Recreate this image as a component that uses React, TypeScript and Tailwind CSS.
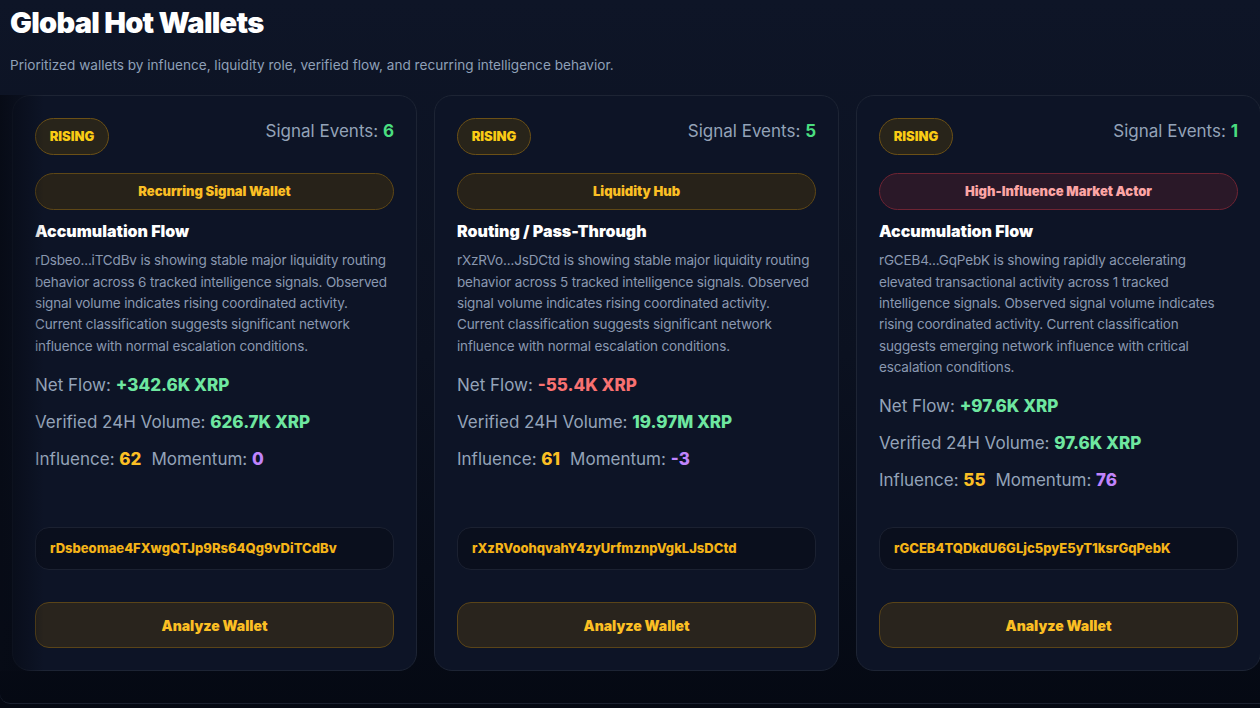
const wallets = [
  {
    role: "Recurring Signal Wallet",
    tone: "amber",
    events: 6,
    title: "Accumulation Flow",
    desc: "rDsbeo...iTCdBv is showing stable major liquidity routing behavior across 6 tracked intelligence signals. Observed signal volume indicates rising coordinated activity. Current classification suggests significant network influence with normal escalation conditions.",
    net: "+342.6K XRP",
    netUp: true,
    volume: "626.7K XRP",
    influence: 62,
    momentum: "0",
    address: "rDsbeomae4FXwgQTJp9Rs64Qg9vDiTCdBv",
  },
  {
    role: "Liquidity Hub",
    tone: "amber",
    events: 5,
    title: "Routing / Pass-Through",
    desc: "rXzRVo...JsDCtd is showing stable major liquidity routing behavior across 5 tracked intelligence signals. Observed signal volume indicates rising coordinated activity. Current classification suggests significant network influence with normal escalation conditions.",
    net: "-55.4K XRP",
    netUp: false,
    volume: "19.97M XRP",
    influence: 61,
    momentum: "-3",
    address: "rXzRVoohqvahY4zyUrfmznpVgkLJsDCtd",
  },
  {
    role: "High-Influence Market Actor",
    tone: "red",
    events: 1,
    title: "Accumulation Flow",
    desc: "rGCEB4...GqPebK is showing rapidly accelerating elevated transactional activity across 1 tracked intelligence signals. Observed signal volume indicates rising coordinated activity. Current classification suggests emerging network influence with critical escalation conditions.",
    net: "+97.6K XRP",
    netUp: true,
    volume: "97.6K XRP",
    influence: 55,
    momentum: "76",
    address: "rGCEB4TQDkdU6GLjc5pyE5yT1ksrGqPebK",
  },
];

type Wallet = (typeof wallets)[number];

const WalletCard = ({ w }: { w: Wallet }) => {
  return (
    <article className="flex flex-col w-[405px] h-[576px] flex-shrink-0 rounded-[18px] border border-[#1d2434] bg-[#0d1426] px-[22px] pt-[22px] pb-[22px]">
      <div className="flex items-start justify-between">
        <span className="flex items-center justify-center w-[74px] h-[37px] rounded-full border border-[#6b5016] bg-[#28241a] text-[13px] font-black text-[#facc15]">
          RISING
        </span>
        <p className="text-[17px] text-[#94a3b8] mt-[1px]">
          Signal Events: <span className="font-bold text-[#4ade80]">{w.events}</span>
        </p>
      </div>

      <div
        className={
          w.tone === "red"
            ? "mt-[18px] flex items-center justify-center h-[37px] rounded-full border border-[#6e2433] bg-[#2a1828] text-[13px] font-black text-[#fca5a5]"
            : "mt-[18px] flex items-center justify-center h-[37px] rounded-full border border-[#5e4716] bg-[#272219] text-[13px] font-black text-[#fbbf24]"
        }
      >
        {w.role}
      </div>

      <h3 className="mt-[11px] text-[16px] font-black text-white leading-[20px]">{w.title}</h3>
      <p className="mt-[9px] text-[13.5px] tracking-[-0.012em] leading-[21.3px] text-[#8a98b0]">{w.desc}</p>

      <div className="mt-[17px] flex flex-col gap-[15px] text-[17px] text-[#94a3b8] leading-[22px]">
        <p>
          Net Flow:{" "}
          <span className={w.netUp ? "font-extrabold text-[#6ee7a0]" : "font-extrabold text-[#f87171]"}>{w.net}</span>
        </p>
        <p>
          Verified 24H Volume: <span className="font-extrabold text-[#6ee7a0]">{w.volume}</span>
        </p>
        <p>
          Influence: <span className="font-extrabold text-[#fbbf24]">{w.influence}</span>
          <span className="ml-[10px]">Momentum: </span>
          <span className="font-extrabold text-[#c084fc]">{w.momentum}</span>
        </p>
      </div>

      <div className="mt-auto flex items-center h-[43px] rounded-[14px] border border-[#1b2131] bg-[#0a0f1d] px-[14px] text-[13px] font-extrabold text-[#f5b418]">
        {w.address}
      </div>
      <button className="mt-[32px] h-[46px] rounded-[14px] border border-[#5a4418] bg-[#29241d] text-[14px] font-black text-[#fbbf24]">
        Analyze Wallet
      </button>
    </article>
  );
};

const App = () => {
  return (
    <main
      className="w-[1260px] h-[708px] overflow-hidden bg-gradient-to-b from-[#0e1527] via-[#0b1120] to-[#050913]"
      style={{ fontFamily: "Inter, 'Noto Sans', sans-serif" }}
    >
      <section className="h-[704px] border-b border-[#1c2231] rounded-bl-[10px]">
        <h1 className="pl-[10px] pt-[5px] text-[29px] font-black tracking-[-0.025em] text-white leading-[36px]">
          Global Hot Wallets
        </h1>
        <p className="pl-[10px] mt-[14px] text-[13.6px] text-[#8fa0b8]">
          Prioritized wallets by influence, liquidity role, verified flow, and recurring intelligence behavior.
        </p>
        <div className="relative mt-[20px]">
          <div className="flex gap-[17px] pl-[12px]">
            {wallets.map((w) => (
              <WalletCard key={w.address} w={w} />
            ))}
          </div>
          <div className="absolute left-0 top-0 h-full w-[44px] bg-gradient-to-r from-[#070b16] to-transparent" />
        </div>
      </section>
    </main>
  );
};

export default App;
